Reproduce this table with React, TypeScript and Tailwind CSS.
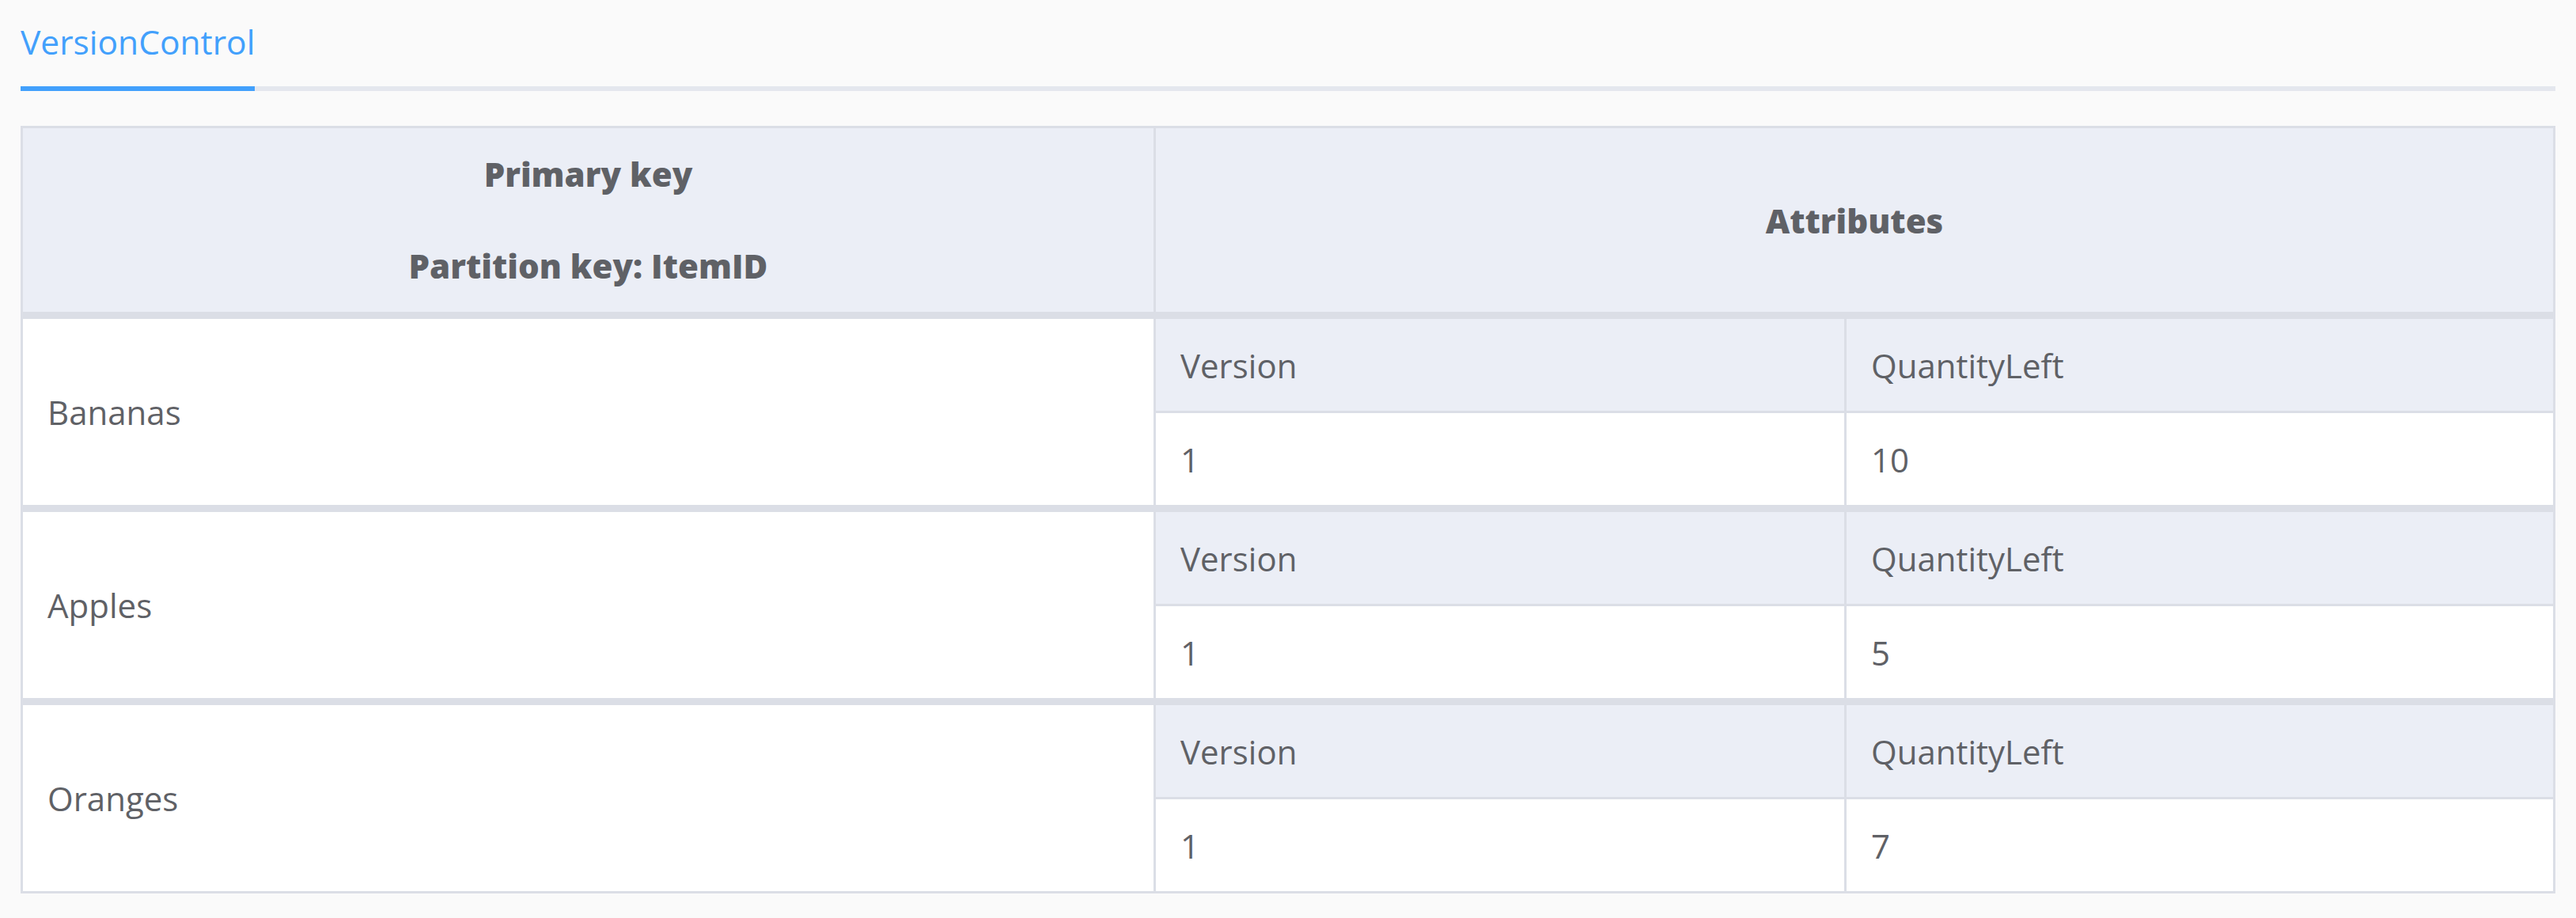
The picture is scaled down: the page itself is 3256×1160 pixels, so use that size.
import React from "react";

type Item = {
  name: string;
  version: string;
  quantityLeft: string;
};

const ITEMS: Item[] = [
  { name: "Bananas", version: "1", quantityLeft: "10" },
  { name: "Apples", version: "1", quantityLeft: "5" },
  { name: "Oranges", version: "1", quantityLeft: "7" },
];

function ItemRow({ item }: { item: Item }) {
  return (
    <div className="flex border-t-[9px] border-[#dbdee6]">
      <div className="flex w-[1432px] shrink-0 items-center border-r-[3px] border-[#dbdee6] bg-white pl-[31px]">
        {item.name}
      </div>
      <div className="flex flex-1 flex-col">
        <div className="flex h-[119px] border-b-[3px] border-[#dbdee6] bg-[#ebeef6]">
          <div className="flex w-[873px] shrink-0 items-center border-r-[3px] border-[#dbdee6] pl-[31px]">
            Version
          </div>
          <div className="flex flex-1 items-center pl-[31px]">QuantityLeft</div>
        </div>
        <div className="flex h-[116px] bg-white">
          <div className="flex w-[873px] shrink-0 items-center border-r-[3px] border-[#dbdee6] pl-[31px]">
            {item.version}
          </div>
          <div className="flex flex-1 items-center pl-[31px]">{item.quantityLeft}</div>
        </div>
      </div>
    </div>
  );
}

export default function App() {
  return (
    <div className="min-h-screen bg-[#fafafa] px-[26px] pb-[30px] font-['Open_Sans',sans-serif] text-[42px] text-[#5f6166]">
      <div className="flex border-b-[6px] border-[#e4e7ee] pt-[21px]">
        <div className="-mb-[6px] border-b-[6px] border-[#42a0fc] pb-[25px] text-[42.5px] leading-[63px] text-[#42a0fc]">
          VersionControl
        </div>
      </div>

      <div className="mt-[44px] border-[3px] border-[#dbdee6]">
        <div className="flex h-[232px] bg-[#ebeef6] font-extrabold">
          <div className="flex w-[1432px] shrink-0 flex-col items-center justify-center gap-[56px] border-r-[3px] border-[#dbdee6] leading-[60px]">
            <p>Primary key</p>
            <p>Partition key: ItemID</p>
          </div>
          <div className="flex flex-1 items-center justify-center">Attributes</div>
        </div>
        {ITEMS.map((item) => (
          <ItemRow key={item.name} item={item} />
        ))}
      </div>
    </div>
  );
}
